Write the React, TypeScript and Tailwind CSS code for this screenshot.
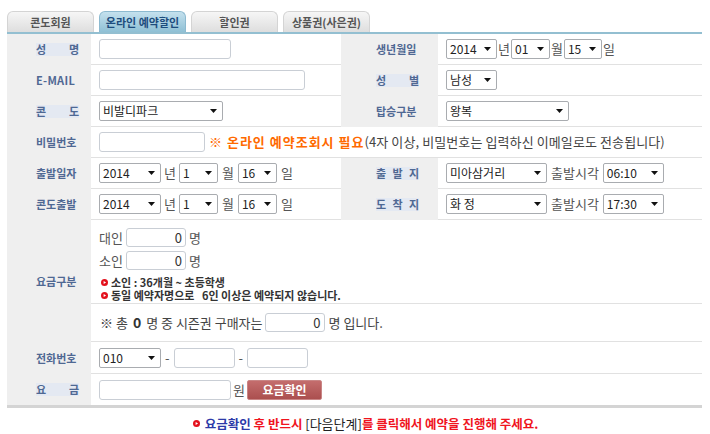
import React from "react";

// 예약 폼 — 온라인 예약할인 탭

const Arrow = () => (
  <svg width="7" height="4" viewBox="0 0 7 4" className="shrink-0">
    <polygon points="0,0 7,0 3.5,4" fill="#111" />
  </svg>
);

function Sel({ w, v }: { w: string; v: string }) {
  return (
    <div
      className={`flex h-[20px] items-center justify-between rounded-[2px] border border-[#a9acb0] bg-white pl-[3px] pr-[5px] text-[12px] leading-none text-[#222] ${w}`}
    >
      <span>{v}</span>
      <Arrow />
    </div>
  );
}

function Inp({ w, v, h = "h-[20px]" }: { w: string; v?: string; h?: string }) {
  return (
    <div
      className={`flex items-center justify-end rounded-[3px] border border-[#c9ced5] bg-white pr-[3px] text-[13px] leading-none text-[#333] ${w} ${h}`}
    >
      {v}
    </div>
  );
}

const Bullet = ({ size = 7 }: { size?: number }) => (
  <svg width={size} height={size} viewBox="0 0 8 8" className="shrink-0">
    <circle cx="4" cy="4" r="4" fill="#e3101c" />
    <polygon points="3,2.3 5.8,4 3,5.7" fill="#fff" />
  </svg>
);

function Label({ children, right }: { children: React.ReactNode; right?: boolean }) {
  return (
    <div className={`flex items-center bg-[#efefef] ${right ? "pl-[35px]" : "pl-[29px]"}`}>
      <div className="text-[11px] font-bold leading-none text-[#4f6893]">{children}</div>
    </div>
  );
}

function Spaced({ chars, right }: { chars: string[]; right?: boolean }) {
  return (
    <div className={`flex items-center bg-[#efefef] ${right ? "pl-[35px]" : "pl-[29px]"}`}>
      <div className="flex w-[43px] justify-between bg-[#e4e9f2] text-[11px] font-bold leading-[13px] text-[#4f6893]">
        {chars.map((c, i) => (
          <span key={i}>{c}</span>
        ))}
      </div>
    </div>
  );
}

const Cell = ({ children, className = "" }: { children?: React.ReactNode; className?: string }) => (
  <div className={`flex items-center border-b border-[#e1e1e1] pl-[8px] text-[13px] text-[#555] ${className}`}>{children}</div>
);

const tabs = ["콘도회원", "온라인 예약할인", "할인권", "상품권(사은권)"];

export default function App() {
  return (
    <div className="h-[434px] w-[710px] bg-white font-['Noto_Sans_CJK_KR','Noto_Sans',sans-serif]">
      <div className="ml-[7px] w-[695px]">
        {/* tabs */}
        <div className="flex gap-[5px] pt-[11px]">
          {tabs.map((t, i) => (
            <div
              key={t}
              className={`flex h-[21px] w-[87px] items-center justify-center rounded-t-[6px] border border-b-0 text-[11px] font-bold leading-none ${
                i === 1
                  ? "border-[#8dbad0] bg-gradient-to-b from-[#c4e1ee] to-[#8fc0d5] text-[#1d4c7d]"
                  : "border-[#d4d4d4] bg-gradient-to-b from-[#f6f6f6] to-[#dedede] text-[#555]"
              }`}
            >
              {t}
            </div>
          ))}
        </div>
        <div className="h-[2px] bg-[#93bfd1]" />

        <div className="grid grid-cols-[84px_250px_97px_264px]">
          {/* 성명 / 생년월일 */}
          <Spaced chars={["성", "명"]} />
          <Cell className="h-[31px]">
            <Inp w="w-[132px]" />
          </Cell>
          <Label right>생년월일</Label>
          <Cell className="h-[31px] gap-[1px]">
            <Sel w="w-[51px]" v="2014" />
            <span>년</span>
            <Sel w="w-[39px]" v="01" />
            <span>월</span>
            <Sel w="w-[38px]" v="15" />
            <span>일</span>
          </Cell>

          {/* E-MAIL / 성별 */}
          <Label>
            <span className="tracking-[0.3px]">E-MAIL</span>
          </Label>
          <Cell className="h-[31px]">
            <Inp w="w-[206px]" />
          </Cell>
          <Spaced chars={["성", "별"]} right />
          <Cell className="h-[31px]">
            <Sel w="w-[51px]" v="남성" />
          </Cell>

          {/* 콘도 / 탑승구분 */}
          <Spaced chars={["콘", "도"]} />
          <Cell className="h-[31px]">
            <Sel w="w-[124px]" v="비발디파크" />
          </Cell>
          <Label right>탑승구분</Label>
          <Cell className="h-[31px]">
            <Sel w="w-[123px]" v="왕복" />
          </Cell>

          {/* 비밀번호 */}
          <Label>비밀번호</Label>
          <Cell className="col-span-3 h-[31px]">
            <Inp w="w-[106px]" />
            <span className="ml-[4px] text-[13px] font-bold tracking-[1px] text-[#ff6a00]">※ 온라인 예약조회시 필요</span>
            <span className="text-[13px] tracking-[0.1px] text-[#444]">(4자 이상, 비밀번호는 입력하신 이메일로도 전송됩니다)</span>
          </Cell>

          {/* 출발일자 / 출발지 */}
          <Label>출발일자</Label>
          <Cell className="h-[31px]">
            <Sel w="w-[62px]" v="2014" />
            <span className="mx-[3px]">년</span>
            <Sel w="w-[39px]" v="1" />
            <span className="mx-[4px]">월</span>
            <Sel w="w-[39px]" v="16" />
            <span className="ml-[4px]">일</span>
          </Cell>
          <Spaced chars={["출", "발", "지"]} right />
          <Cell className="h-[31px]">
            <Sel w="w-[101px]" v="미아삼거리" />
            <span className="mx-[4px]">출발시각</span>
            <Sel w="w-[61px]" v="06:10" />
          </Cell>

          {/* 콘도출발 / 도착지 */}
          <Label>콘도출발</Label>
          <Cell className="h-[31px]">
            <Sel w="w-[62px]" v="2014" />
            <span className="mx-[3px]">년</span>
            <Sel w="w-[39px]" v="1" />
            <span className="mx-[4px]">월</span>
            <Sel w="w-[39px]" v="16" />
            <span className="ml-[4px]">일</span>
          </Cell>
          <Spaced chars={["도", "착", "지"]} right />
          <Cell className="h-[31px]">
            <Sel w="w-[101px]" v="화 정" />
            <span className="mx-[4px]">출발시각</span>
            <Sel w="w-[61px]" v="17:30" />
          </Cell>

          {/* 요금구분 */}
          <Label>요금구분</Label>
          <div className="col-span-3 flex flex-col">
            <div className="flex h-[84px] flex-col border-b border-[#e1e1e1] pl-[8px] pt-[8px] text-[13px] text-[#555]">
              <div className="flex h-[19px] items-center">
                <span className="w-[27px]">대인</span>
                <Inp w="w-[60px]" v="0" h="h-[19px]" />
                <span className="ml-[3px]">명</span>
              </div>
              <div className="mt-[4px] flex h-[19px] items-center">
                <span className="w-[27px]">소인</span>
                <Inp w="w-[60px]" v="0" h="h-[19px]" />
                <span className="ml-[3px]">명</span>
              </div>
              <div className="mt-[7px] flex h-[11px] items-center gap-[3px] pl-[2px] text-[11px] font-bold leading-[11px] text-[#333]">
                <Bullet />
                <span>소인 : 36개월 ~ 초등학생</span>
              </div>
              <div className="mt-[2px] flex h-[11px] items-center gap-[3px] pl-[2px] text-[11px] font-bold leading-[11px] text-[#333]">
                <Bullet />
                <span className="whitespace-pre">동일 예약자명으로   6인 이상은 예약되지 않습니다.</span>
              </div>
            </div>
            <div className="flex h-[38px] items-center border-b border-[#e1e1e1] pl-[9px] text-[13px] text-[#444]">
              <span>※ 총</span>
              <span className="mx-[5px] text-[14px] font-bold text-[#333]">0</span>
              <span>명 중 시즌권 구매자는</span>
              <span className="ml-[2px]">
                <Inp w="w-[60px]" v="0" h="h-[19px]" />
              </span>
              <span className="ml-[4px]">명 입니다.</span>
            </div>
          </div>

          {/* 전화번호 */}
          <Label>전화번호</Label>
          <Cell className="col-span-3 h-[32px]">
            <Sel w="w-[62px]" v="010" />
            <span className="mx-[4px]">-</span>
            <Inp w="w-[61px]" />
            <span className="mx-[4px]">-</span>
            <Inp w="w-[61px]" />
          </Cell>

          {/* 요금 */}
          <Spaced chars={["요", "금"]} />
          <div className="col-span-3 flex h-[31px] items-center pl-[8px] text-[13px] text-[#555]">
            <Inp w="w-[132px]" />
            <span className="mx-[2px]">원</span>
            <div className="flex h-[20px] w-[75px] items-center justify-center rounded-[2px] border border-[#c98585] bg-gradient-to-b from-[#c46d6d] to-[#ab4f4f] text-[12px] font-bold leading-none text-white">
              요금확인
            </div>
          </div>
        </div>
        <div className="h-[3px] bg-[#d4d4d4]" />

        {/* 안내 */}
        <div className="mt-[9px] flex items-center justify-center gap-[5px] pl-[22px] text-[12.5px] font-bold leading-none">
          <Bullet />
          <span>
            <span className="text-[#2d3aa8]">요금확인</span>
            <span className="text-[#f0141e]"> 후 반드시 </span>
            <span className="text-[13px] font-normal text-[#222]">[다음단계]</span>
            <span className="text-[#f0141e]">를 클릭해서 예약을 진행해 주세요.</span>
          </span>
        </div>
      </div>
    </div>
  );
}
